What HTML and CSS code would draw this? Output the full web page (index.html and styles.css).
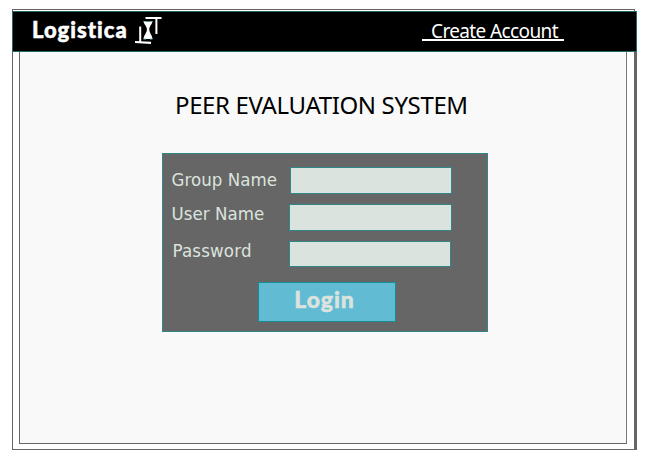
FILE: index.html
```html
<!DOCTYPE html>
<html lang="en">
<head>
<meta charset="utf-8">
<title>Logistica - Peer Evaluation System</title>
<link rel="stylesheet" href="styles.css">
</head>
<body>
<div class="window">
  <header class="topbar">
    <span class="brand">Logistica</span>
    <svg class="mark" width="28" height="30" viewBox="0 0 28 30" fill="none" stroke="#fff">
      <path d="M11.500 3H27.500" stroke-width="2"/>
      <path d="M22.400 3V19M6.200 11.500V27" stroke-width="2"/>
      <path d="M1 27L17 27.800" stroke-width="2.200"/>
      <path d="M9.500 6.500H18.500C18 9.500 15.300 11 15.300 14.500C15.300 18 18 19.500 18.500 24H9.500C10 19.500 12.900 18 12.900 14.500C12.900 11 10 9.500 9.500 6.500Z" fill="#fff" stroke="none"/>
      <path d="M9.500 6.500H12M16 6.500H18.500M9.500 24H12M16 24H18.500" stroke="#5fc0c0" stroke-width="1"/>
    </svg>
    <a class="create">Create Account</a>
  </header>
  <main class="content">
    <h1 class="title">PEER EVALUATION SYSTEM</h1>
    <form class="panel">
      <div class="row group"><label for="g">Group Name</label><input id="g" type="text"></div>
      <div class="row user"><label for="u">User Name</label><input id="u" type="text"></div>
      <div class="row pass"><label for="p">Password</label><input id="p" type="password"></div>
      <button class="login" type="button"><span>Login</span></button>
    </form>
  </main>
</div>
</body>
</html>
```
FILE: styles.css
```css
* { box-sizing: border-box; }
body {
  margin: 0;
  padding: 9px 0 0 12px;
  background: #fff;
  font-family: "Noto Sans", sans-serif;
}
.window {
  width: 623px;
  height: 441px;
  border: 1px solid #666;
  box-shadow: 2px 2px 0 #666;
  background: #fff;
  padding-top: 1px;
}
.topbar {
  display: flex;
  width: 625px;
  height: 41px;
  margin-left: -1px;
  border: 1px solid #26686a;
  background: #000;
  color: #fff;
}
.brand {
  width: 101px;
  margin-left: 19px;
  font: 900 22px/36px Lato, sans-serif;
  font-variant-ligatures: none;
  letter-spacing: 1px;
  -webkit-text-stroke: .5px #fff;
  white-space: nowrap;
}
.mark { margin: 3px 0 0 1px; }
.create {
  width: 142px;
  height: 29px;
  margin-left: 260px;
  padding-left: 9px;
  border-bottom: 2px solid #fff;
  font-size: 19px;
  letter-spacing: -.62px;
  line-height: 39px;
  white-space: nowrap;
}
.content {
  width: 608px;
  height: 392px;
  margin-left: 6px;
  border: 1px solid #666;
  border-top: 0;
  border-right-color: #777;
  background: #f9f9f9;
}
.title {
  margin: 0 0 0 155px;
  padding-top: 36px;
  height: 101px;
  font-size: 24px;
  letter-spacing: -.37px;
  font-weight: 400;
  line-height: 34px;
  color: #000;
  white-space: nowrap;
}
.panel {
  width: 326px;
  height: 179px;
  margin-left: 142px;
  padding: 13px 0 0 8px;
  border: 1px solid #318788;
  background: #666;
}
.row { display: flex; height: 37px; }
.row label {
  width: 118px;
  color: #dbe3de;
  padding-left: .5px;
  font: 18.500px/25px "DejaVu Sans Condensed", "DejaVu Sans", sans-serif;
  letter-spacing: .05px;
  white-space: nowrap;
}
.row input {
  width: 163px;
  height: 27px;
  padding: 0 6px;
  border: 1px solid #318788;
  border-radius: 0;
  background: #dbe3de;
  font: 18px "Noto Sans", sans-serif;
  outline: 0;
}
.group label { width: 119px; }
.group input { width: 162px; }
.user label { line-height: 20px; }
.pass label { padding-left: 1.5px; line-height: 20px; letter-spacing: .2px; }
.pass input { width: 162px; height: 26px; }
.login {
  display: block;
  width: 138px;
  height: 40px;
  margin: 4px 0 0 87px;
  padding: 0 5px 6px 0;
  border: 1px solid #168c95;
  border-radius: 0;
  background: #60bbd3;
  color: #dbe3de;
  font: 900 23px/32px Lato, sans-serif;
  letter-spacing: .9px;
  -webkit-text-stroke: .5px #dbe3de;
}
```
